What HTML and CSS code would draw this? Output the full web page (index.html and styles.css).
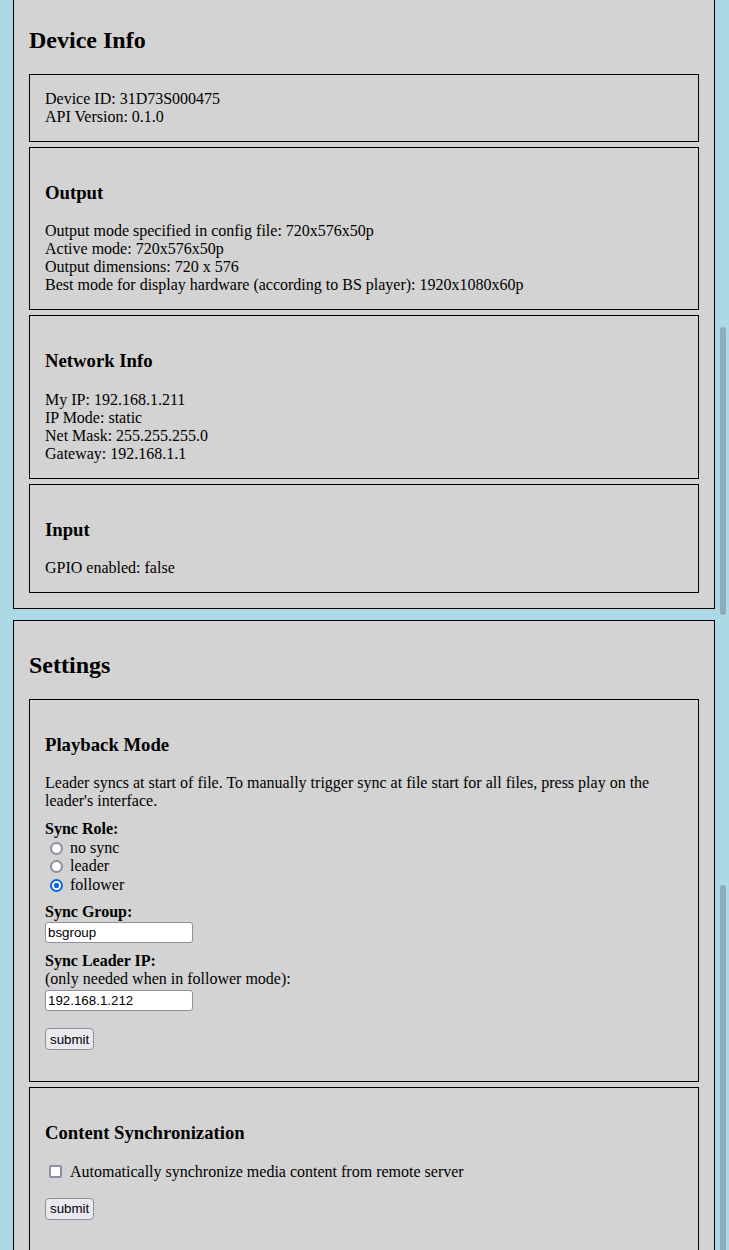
FILE: index.html
```html
<!DOCTYPE html>
<html lang="en">
<head>
<meta charset="utf-8">
<title>Device</title>
<link rel="stylesheet" href="styles.css">
</head>
<body>
<div class="page">
  <section class="panel">
    <h2 class="panel-title">Device Info</h2>
    <div class="box">
      <div>Device ID: 31D73S000475</div>
      <div>API Version: 0.1.0</div>
    </div>
    <div class="box">
      <h3 class="box-title">Output</h3>
      <div>Output mode specified in config file: 720x576x50p</div>
      <div>Active mode: 720x576x50p</div>
      <div>Output dimensions: 720 x 576</div>
      <div>Best mode for display hardware (according to BS player): 1920x1080x60p</div>
    </div>
    <div class="box">
      <h3 class="box-title">Network Info</h3>
      <div>My IP: 192.168.1.211</div>
      <div>IP Mode: static</div>
      <div>Net Mask: 255.255.255.0</div>
      <div>Gateway: 192.168.1.1</div>
    </div>
    <div class="box">
      <h3 class="box-title">Input</h3>
      <div>GPIO enabled: false</div>
    </div>
  </section>

  <section class="panel">
    <h2 class="panel-title">Settings</h2>
    <form class="box">
      <h3 class="box-title">Playback Mode</h3>
      <div class="note">Leader syncs at start of file. To manually trigger sync at file start for all files, press play on the leader's interface.</div>
      <div class="field field-role">
        <div class="label">Sync Role:</div>
        <label class="opt"><input type="radio" name="role" class="radio"><span>no sync</span></label>
        <label class="opt"><input type="radio" name="role" class="radio"><span>leader</span></label>
        <label class="opt"><input type="radio" name="role" class="radio" checked><span>follower</span></label>
      </div>
      <div class="field field-group">
        <div class="label">Sync Group:</div>
        <input type="text" class="text text-group" value="bsgroup">
      </div>
      <div class="field field-ip">
        <div class="label">Sync Leader IP:</div>
        <div>(only needed when in follower mode):</div>
        <input type="text" class="text text-ip" value="192.168.1.212">
      </div>
      <div class="actions"><button type="button" class="btn">submit</button></div>
    </form>
    <form class="box">
      <h3 class="box-title">Content Synchronization</h3>
      <label class="opt opt-check"><input type="checkbox" class="check"><span>Automatically synchronize media content from remote server</span></label>
      <div class="actions"><button type="button" class="btn">submit</button></div>
    </form>
  </section>
</div>
<div class="thumb thumb-1"></div>
<div class="thumb thumb-2"></div>
</body>
</html>
```

FILE: styles.css
```css
html, body {
  margin: 0;
  padding: 0;
  overflow: hidden;
  background: #add8e6;
}

body {
  font-family: "Liberation Serif", "Times New Roman", serif;
  font-size: 16px;
  line-height: 18px;
  color: #000;
}

.page {
  margin-top: -5px;
  padding: 0 14px 0 13px;
}

.panel {
  background: #d3d3d3;
  border: 1px solid #000;
  padding: 10px 15px 15px;
  margin-bottom: 11px;
}

.panel-title {
  font-size: 24px;
  line-height: 28px;
  font-weight: bold;
  margin: 20px 0;
}

.box {
  border: 1px solid #000;
  padding: 15px;
  margin: 0 0 5px;
}

.box:last-child {
  margin-bottom: 0;
}

.box-title {
  font-size: 18.72px;
  line-height: 21.33px;
  font-weight: bold;
  margin: 19px 0;
}

.field-role {
  margin-top: 10px;
}

.field-group,
.field-ip {
  margin-top: 9px;
}

.label {
  font-weight: bold;
}

.opt {
  display: flex;
  align-items: center;
  height: 18.5px;
}

.opt-check {
  height: 18px;
}

.radio {
  appearance: none;
  -webkit-appearance: none;
  box-sizing: border-box;
  width: 13px;
  height: 13px;
  margin: 1px 7px 0 5px;
  border: 2px solid #8f8f9d;
  border-radius: 50%;
  background: #fff;
  flex: none;
}

.radio:checked {
  border-color: #0b67e8;
  background: radial-gradient(circle, #0b67e8 0 2.4px, #fff 3px);
}

.check {
  appearance: none;
  -webkit-appearance: none;
  box-sizing: border-box;
  width: 13px;
  height: 13px;
  margin: 0 8px 0 4px;
  border: 2px solid #8f8f9d;
  border-radius: 2px;
  background: #fff;
  flex: none;
}

.text {
  display: block;
  box-sizing: border-box;
  width: 148px;
  height: 21px;
  margin: 1px 0 0;
  padding: 0 2px;
  border: 1px solid #8f8f9d;
  border-radius: 3px;
  background: #fff;
  font-family: "Liberation Sans", Arial, sans-serif;
  font-size: 13.33px;
  color: #000;
}

.text-ip {
  margin-top: 2.5px;
}

.actions {
  margin: 17px 0 16px;
}

.btn {
  box-sizing: border-box;
  height: 22px;
  padding: 0 4px;
  border: 1px solid #8f8f9d;
  border-radius: 4px;
  background: #e9e9ed;
  font-family: "Liberation Sans", Arial, sans-serif;
  font-size: 13.33px;
  color: #000;
}

.thumb {
  position: fixed;
  left: 720px;
  width: 6px;
  background: #8badb8;
  border-radius: 3px;
}

.thumb-1 {
  top: 327px;
  height: 288px;
}

.thumb-2 {
  top: 885px;
  height: 380px;
}
```
